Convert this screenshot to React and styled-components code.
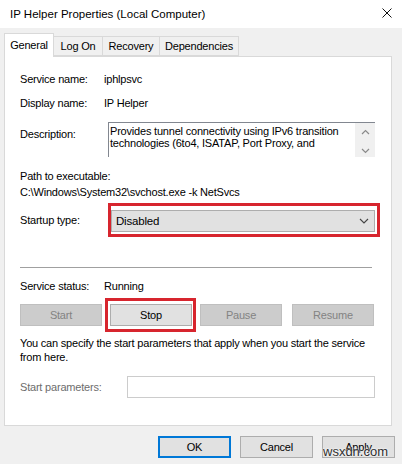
import React from 'react';
import styled, { createGlobalStyle } from 'styled-components';

const GlobalStyle = createGlobalStyle`
  html, body {
    margin: 0;
    padding: 0;
    background: #f0f0f0;
  }
  body {
    font-family: "Liberation Sans", Arial, sans-serif;
    font-size: 11px;
    letter-spacing: -0.2px;
    color: #000;
  }
  * { box-sizing: border-box; }
`;

const tabs = [
  { name: 'General', w: 50 },
  { name: 'Log On', w: 50 },
  { name: 'Recovery', w: 58 },
  { name: 'Dependencies', w: 80 },
];

function App() {
  return (
    <>
      <GlobalStyle />
      <Window>
        <TitleBar>
          <Title>IP Helper Properties (Local Computer)</Title>
          <Close viewBox="0 0 10 10">
            <path d="M0.5 0.5 L9.5 9.5 M9.5 0.5 L0.5 9.5" stroke="#111" strokeWidth="1" fill="none" />
          </Close>
        </TitleBar>

        <Body>
          <TabStrip>
            {tabs.map((t, i) => (
              <Tab key={t.name} $w={t.w} $active={i === 0}>{t.name}</Tab>
            ))}
          </TabStrip>

          <Panel>
            <Row $mt={16}>
              <Label>Service name:</Label>
              <Value>iphlpsvc</Value>
            </Row>
            <Row $mt={11}>
              <Label>Display name:</Label>
              <Value>IP Helper</Value>
            </Row>
            <TopRow $mt={12}>
              <Label $pt={6}>Description:</Label>
              <DescBox>
                {/* only the scrolled-into-view part of the description */}
                <DescText>
                  Provides tunnel connectivity using IPv6 transition technologies (6to4, ISATAP, Port Proxy, and
                </DescText>
                <ScrollCol>
                  <svg width="9" height="6" viewBox="0 0 9 6">
                    <path d="M1 5 L4.5 1.5 L8 5" stroke="#8a8a8a" strokeWidth="1.2" fill="none" />
                  </svg>
                  <svg width="9" height="6" viewBox="0 0 9 6">
                    <path d="M1 1 L4.5 4.5 L8 1" stroke="#8a8a8a" strokeWidth="1.2" fill="none" />
                  </svg>
                </ScrollCol>
              </DescBox>
            </TopRow>

            <PathBlock>
              <div>Path to executable:</div>
              <div>C:\Windows\System32\svchost.exe -k NetSvcs</div>
            </PathBlock>

            <Row $mt={3}>
              <Label>Startup type:</Label>
              <Highlight $pad="4px 2px 2px 0">
                <Combo>
                  <span>Disabled</span>
                  <svg width="10" height="6" viewBox="0 0 10 6">
                    <path d="M1 1 L5 5 L9 1" stroke="#444" strokeWidth="1.1" fill="none" />
                  </svg>
                </Combo>
              </Highlight>
            </Row>

            <Separator />

            <Row $mt={12}>
              <Label>Service status:</Label>
              <Value>Running</Value>
            </Row>

            <ButtonRow>
              <ServiceButton disabled>Start</ServiceButton>
              <StopFrame>
                <ServiceButton>Stop</ServiceButton>
              </StopFrame>
              <ServiceButton disabled>Pause</ServiceButton>
              <ServiceButton disabled $ml={2}>Resume</ServiceButton>
            </ButtonRow>

            <Hint>
              You can specify the start parameters that apply when you start the service from here.
            </Hint>

            <Row $mt={12}>
              <Label $w={107} $muted>Start parameters:</Label>
              <ParamInput disabled />
            </Row>
          </Panel>

          <Footer>
            <DialogButton $default>OK</DialogButton>
            <DialogButton>Cancel</DialogButton>
            <DialogButton>Apply</DialogButton>
          </Footer>
        </Body>

        <Watermark>wsxdn.com</Watermark>
      </Window>
    </>
  );
}

export default App;

const Window = styled.div`
  position: relative;
  width: 402px;
  height: 464px;
  background: #f0f0f0;
  display: flex;
  flex-direction: column;
  overflow: hidden;
`;

const TitleBar = styled.div`
  height: 28px;
  flex-shrink: 0;
  background: #fff;
  display: flex;
  align-items: center;
  justify-content: space-between;
  padding: 0 10px 0 10px;
`;

const Title = styled.span`
  font-size: 11.5px;
  letter-spacing: 0;
  color: #000;
`;

const Close = styled.svg`
  width: 10px;
  height: 10px;
  margin-top: -2px;
`;

const Body = styled.div`
  display: flex;
  flex-direction: column;
  padding: 0 10px 0 4px;
`;

const TabStrip = styled.div`
  height: 28px;
  display: flex;
  align-items: flex-end;
`;

const Tab = styled.div`
  width: ${p => p.$w}px;
  height: ${p => (p.$active ? 24 : 20)}px;
  margin-bottom: ${p => (p.$active ? -1 : 0)}px;
  margin-left: ${p => (p.$active ? 0 : -1)}px;
  position: relative;
  z-index: ${p => (p.$active ? 1 : 0)};
  display: flex;
  align-items: center;
  justify-content: center;
  background: ${p => (p.$active ? '#fff' : '#f0f0f0')};
  border: 1px solid #d9d9d9;
  border-bottom: ${p => (p.$active ? 'none' : '1px solid #d9d9d9')};
  padding-bottom: ${p => (p.$active ? 1 : 0)}px;
  color: #000;
`;

const Panel = styled.div`
  height: 370px;
  background: #fff;
  border: 1px solid #d9d9d9;
  padding: 0 16px 0 15px;
  display: flex;
  flex-direction: column;
`;

const Row = styled.div`
  display: flex;
  align-items: center;
  margin-top: ${p => p.$mt || 0}px;
  line-height: 13px;
`;

const TopRow = styled(Row)`
  align-items: flex-start;
`;

const Label = styled.div`
  width: ${p => p.$w || 84}px;
  flex-shrink: 0;
  padding-top: ${p => p.$pt || 0}px;
  color: ${p => (p.$muted ? '#6d6d6d' : '#000')};
`;

const Value = styled.div`
  color: #000;
`;

const DescBox = styled.div`
  margin-left: 4px;
  width: 267px;
  height: 35px;
  display: flex;
  border-top: 1px solid #828790;
  border-left: 1px solid #828790;
  background: #fff;
`;

const DescText = styled.div`
  flex: 1;
  padding: 2px 0 0 1px;
  line-height: 12px;
  width: 245px;
`;

const ScrollCol = styled.div`
  width: 20px;
  background: #f0f0f0;
  display: flex;
  flex-direction: column;
  align-items: center;
  justify-content: space-between;
  padding: 6px 0 3px;
`;

const PathBlock = styled.div`
  margin-top: 11px;
  line-height: 16px;
`;

const Highlight = styled.div`
  margin-left: 4px;
  border: 3px solid #d7252e;
  padding: ${p => p.$pad};
`;

const Combo = styled.div`
  width: 264px;
  height: 22px;
  background: #e1e1e1;
  border: 1px solid #adadad;
  display: flex;
  align-items: center;
  justify-content: space-between;
  padding: 0 5px 0 4px;
  font-size: 11.5px;
`;

const Separator = styled.div`
  margin-top: 30px;
  height: 1px;
  width: 352px;
  background: #a0a0a0;
`;

const ButtonRow = styled.div`
  margin-top: 11px;
  display: flex;
  gap: 8px;
`;

const ServiceButton = styled.button`
  width: 82px;
  height: 22px;
  margin-left: ${p => p.$ml || 0}px;
  font: inherit;
  letter-spacing: inherit;
  padding: 0;
  background: ${p => (p.disabled ? '#cccccc' : '#e1e1e1')};
  border: 1px solid ${p => (p.disabled ? '#bfbfbf' : '#adadad')};
  color: ${p => (p.disabled ? '#838383' : '#000')};
`;

const StopFrame = styled.div`
  display: flex;
  border: 3px solid #d7252e;
  padding: 3px 1px 3px 2px;
  margin: -6px -4px -6px -5px;
`;

const Hint = styled.div`
  margin-top: 10px;
  line-height: 14px;
  width: 352px;
`;

const ParamInput = styled.input`
  width: 249px;
  height: 22px;
  border: 1px solid #cccccc;
  background: #fff;
  margin: 0;
`;

const Footer = styled.div`
  display: flex;
  justify-content: flex-end;
  gap: 9px;
  padding: 10px 0 0 0;
  margin-right: -3px;
`;

const DialogButton = styled.button`
  width: 73px;
  height: 22px;
  font: inherit;
  letter-spacing: inherit;
  padding: 0;
  background: #e1e1e1;
  color: #000;
  border: ${p => (p.$default ? '2px solid #0078d7' : '1px solid #adadad')};
`;

const Watermark = styled.span`
  position: absolute;
  left: 323px;
  top: 444px;
  font-size: 13px;
  letter-spacing: 0;
  line-height: 15px;
  color: #2e2e2e;
  text-shadow: 0 0 2px #fff, 0 0 2px #fff;
`;
